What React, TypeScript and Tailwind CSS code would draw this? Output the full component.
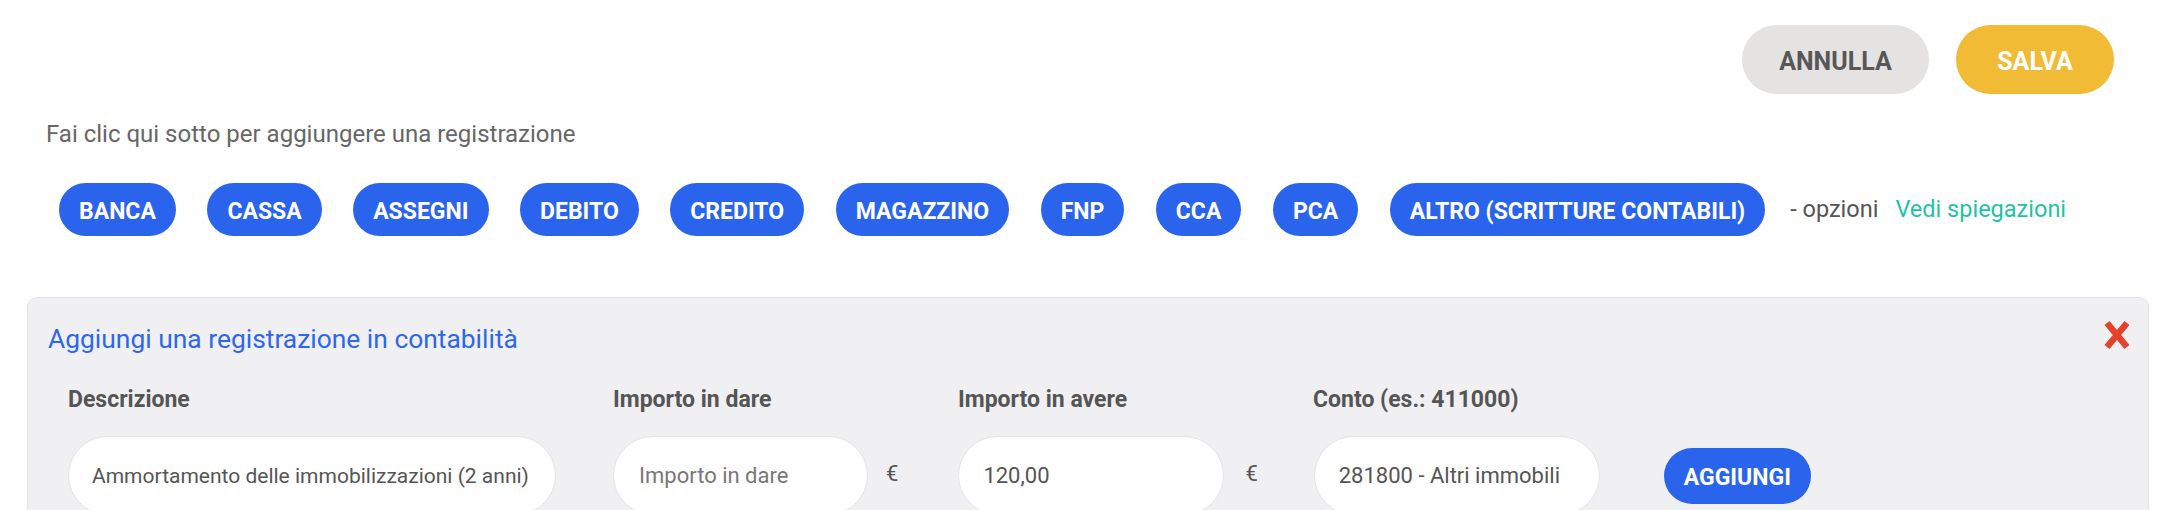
const categories = [
  "BANCA",
  "CASSA",
  "ASSEGNI",
  "DEBITO",
  "CREDITO",
  "MAGAZZINO",
  "FNP",
  "CCA",
  "PCA",
  "ALTRO (SCRITTURE CONTABILI)",
];

function CloseIcon() {
  return (
    <svg width="28" height="32" viewBox="0 0 28 32" aria-hidden="true">
      <path d="M4 4 L24 28 M24 4 L4 28" stroke="#e5412d" strokeWidth="6.5" strokeLinecap="butt" fill="none" />
    </svg>
  );
}

function Euro() {
  return <span className="text-[22px] leading-none text-[#555]">€</span>;
}

export default function App() {
  return (
    <div className="min-h-screen bg-white font-['Roboto',sans-serif] text-[#555]">
      {/* Actions */}
      <div className="flex justify-end gap-[27px] pt-[25px] pr-[62px]">
        <button className="flex h-[69px] w-[187px] items-center justify-center rounded-full bg-[#e4e3e1] pt-[4px] text-[25px] font-bold leading-none text-[#575757]">
          ANNULLA
        </button>
        <button className="flex h-[69px] w-[158px] items-center justify-center rounded-full bg-[#f2bb36] pt-[4px] text-[25px] font-bold leading-none text-white">
          SALVA
        </button>
      </div>

      <p className="mt-[28px] pl-[46px] text-[24px] leading-none text-[#666]">
        Fai clic qui sotto per aggiungere una registrazione
      </p>

      {/* Categories */}
      <div className="mt-[37px] flex items-center pl-[59px]">
        <div className="flex gap-[31.5px]">
          {categories.map((c) => (
            <button
              key={c}
              className="flex h-[53px] items-center rounded-full bg-[#2b64ec] px-[20px] pt-[4px] text-[23px] font-bold leading-none text-white"
            >
              {c}
            </button>
          ))}
        </div>
        <span className="ml-[25px] text-[23.5px] leading-none text-[#555]">- opzioni</span>
        <a className="ml-[17px] text-[23.5px] leading-none text-[#1fc3a3]">Vedi spiegazioni</a>
      </div>

      {/* Add entry panel */}
      <div className="relative mx-[27px] mt-[61px] rounded-[10px] border border-[#e4e4e6] bg-[#f0f0f2] pb-[30px] pt-[28px]">
        <h2 className="pl-[20px] text-[26.4px] font-normal leading-none text-[#2d67ef]">
          Aggiungi una registrazione in contabilità
        </h2>
        <button className="absolute right-[17px] top-[21px]" aria-label="Chiudi">
          <CloseIcon />
        </button>

        <div className="mt-[36px] flex pl-[40px] text-[23px] font-bold leading-none text-[#555]">
          <span className="w-[545px]">Descrizione</span>
          <span className="w-[345px]">Importo in dare</span>
          <span className="w-[355px]">Importo in avere</span>
          <span>Conto (es.: 411000)</span>
        </div>

        <div className="mt-[25px] flex items-center pl-[40px]">
          <input
            readOnly
            value="Ammortamento delle immobilizzazioni (2 anni)"
            className="h-[79px] w-[488px] rounded-full border border-[#e4e4e4] bg-white pl-[23px] pr-[6px] text-[21px] text-[#555] outline-none"
          />
          <input
            readOnly
            placeholder="Importo in dare"
            className="ml-[57px] h-[79px] w-[255px] rounded-full border border-[#e4e4e4] bg-white px-[25px] text-[22px] text-[#555] outline-none placeholder:text-[#777]"
          />
          <span className="ml-[18px]">
            <Euro />
          </span>
          <input
            readOnly
            value="120,00"
            className="ml-[60px] h-[79px] w-[266px] rounded-full border border-[#e4e4e4] bg-white px-[24px] text-[22px] text-[#555] outline-none"
          />
          <span className="ml-[21px]">
            <Euro />
          </span>
          <input
            readOnly
            value="281800 - Altri immobili"
            className="ml-[56px] h-[79px] w-[286px] rounded-full border border-[#e4e4e4] bg-white px-[24px] text-[22px] text-[#555] outline-none"
          />
          <button className="ml-[64px] flex h-[56px] items-center rounded-full bg-[#2b64ec] px-[20px] pt-[3px] text-[23px] font-bold leading-none text-white">
            AGGIUNGI
          </button>
        </div>
      </div>
    </div>
  );
}
